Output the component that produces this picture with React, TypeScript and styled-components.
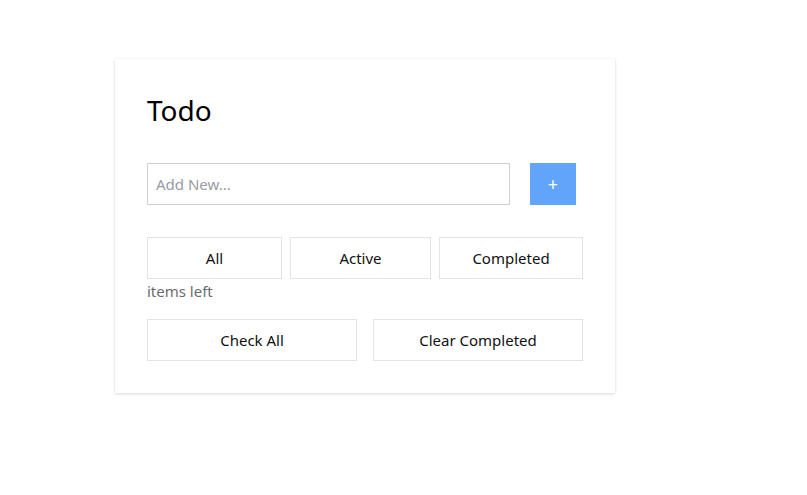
import React from "react";
import styled, { createGlobalStyle } from "styled-components";

const Global = createGlobalStyle`
  html, body { margin: 0; padding: 0; background: #fff; }
  body { font-family: "Noto Sans", "Open Sans", sans-serif; color: #111; }
  * { box-sizing: border-box; }
`;

const Page = styled.div`
  min-height: 495px;
  padding: 59px 0 40px 115px;
`;

const Card = styled.div`
  width: 500px;
  padding: 30px 32px 32px;
  background: #fff;
  box-shadow: 0 1px 3px rgba(0, 0, 0, 0.14), 0 0 2px rgba(0, 0, 0, 0.04);
  display: flex;
  flex-direction: column;
`;

const Title = styled.h1`
  margin: 0;
  font-size: 28px;
  font-weight: 400;
  line-height: 42px;
  color: #000;
`;

const AddRow = styled.div`
  display: flex;
  gap: 20px;
  margin-top: 32px;
`;

const Input = styled.input`
  width: 363px;
  height: 42px;
  border: 1px solid #cfcfd6;
  padding: 0 8px;
  font-family: inherit;
  font-size: 15px;
  outline: none;
  &::placeholder { color: #9a9aa4; }
`;

const AddButton = styled.button`
  width: 46px;
  height: 42px;
  border: none;
  background: #60a5fa;
  color: #fff;
  font-size: 18px;
  font-family: inherit;
  display: flex;
  align-items: center;
  justify-content: center;
  padding: 0;
`;

const Filters = styled.div`
  display: grid;
  grid-template-columns: 135px 141px 144px;
  gap: 8px;
  margin-top: 32px;
`;

const Btn = styled.button`
  height: 42px;
  background: #fff;
  border: 1px solid #e3e3e6;
  font-family: inherit;
  font-size: 15px;
  color: #111;
  padding: 0;
`;

const Info = styled.div`
  font-size: 15px;
  color: #6b6b72;
  line-height: 22px;
  margin-top: 1px;
`;

const Actions = styled.div`
  display: grid;
  grid-template-columns: 1fr 1fr;
  gap: 16px;
  margin-top: 17px;
`;

export default function App() {
  return (
    <Page>
      <Global />
      <Card>
        <Title>Todo</Title>
        <AddRow>
          <Input placeholder="Add New..." />
          <AddButton>+</AddButton>
        </AddRow>
        <Filters>
          <Btn>All</Btn>
          <Btn>Active</Btn>
          <Btn>Completed</Btn>
        </Filters>
        <Info>items left</Info>
        <Actions>
          <Btn>Check All</Btn>
          <Btn>Clear Completed</Btn>
        </Actions>
      </Card>
    </Page>
  );
}
